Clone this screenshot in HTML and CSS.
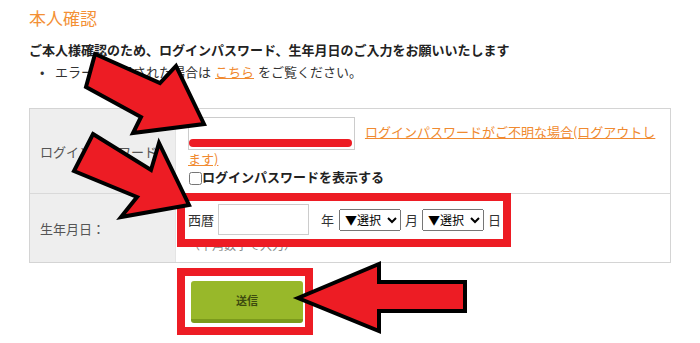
FILE: index.html
```html
<!DOCTYPE html>
<html lang="ja">
<head>
    <meta charset="UTF-8">
    <meta name="viewport" content="width=device-width, initial-scale=1.0">
    <title>本人確認</title>
    <link rel="stylesheet" href="styles.css">
</head>
<body>

    <div class="page">
        <h1 class="title">本人確認</h1>
        <p class="lead">ご本人様確認のため、ログインパスワード、生年月日のご入力をお願いいたします</p>
        <ul class="notes">
            <li>エラーが表示された場合は <a href="#">こちら</a> をご覧ください。</li>
        </ul>

        <!-- Verification form -->
        <div class="form-table">
            <div class="label-cell">ログインパスワード</div>
            <div class="field-cell pw-cell">
                <input type="password" class="pw-input" value="">
                <a href="#" class="forgot-link">ログインパスワードがご不明な場合(ログアウトします)</a>
                <label class="show-pw"><input type="checkbox" class="show-check">ログインパスワードを表示する</label>
            </div>

            <div class="label-cell row-2">生年月日：</div>
            <div class="field-cell birth-cell row-2">
                <div class="birth-row">
                    <span>西暦</span>
                    <input type="text" class="year-input">
                    <span class="unit unit-year">年</span>
                    <select class="pick"><option>▼選択</option></select>
                    <span class="unit">月</span>
                    <select class="pick"><option>▼選択</option></select>
                    <span class="unit">日</span>
                </div>
                <p class="hint">（半角数字で入力）</p>
            </div>
        </div>

        <div class="actions">
            <button class="send-btn">送信</button>
        </div>
    </div>

    <!-- Annotation overlay -->
    <svg class="marks" width="700" height="343" viewBox="0 0 700 343">
        <line x1="193" y1="143" x2="348" y2="143" class="redact" />
        <rect x="181" y="197" width="326" height="46" class="frame" />
        <rect x="181" y="272" width="128" height="59" class="frame" />
        <polygon class="arrow" points="95,54 160,83 176,66 204,124 133,133 141,117 86,87" />
        <polygon class="arrow" points="93,134 151,170 159,143 189,205 121,217 137,197 74,171" />
        <polygon class="arrow" points="298,298 379,264 379,282 465,282 465,311 379,311 379,331" />
    </svg>

</body>
</html>
```

FILE: styles.css
```css
body {
    margin: 0;
    font-family: "Noto Sans CJK JP", "Noto Sans", sans-serif;
    color: #222;
    background: #fff;
    position: relative;
    width: 700px;
    height: 343px;
    overflow: hidden;
}

.page {
    padding: 6px 29px 0;
}

.title {
    font-size: 17px;
    line-height: 24px;
    font-weight: normal;
    color: #f39035;
    margin: 0;
}

.lead {
    font-size: 13px;
    line-height: 18px;
    font-weight: bold;
    margin: 11px 0 0;
}

.notes {
    list-style: none;
    margin: 4px 0 0;
    padding: 0;
    font-size: 13px;
    line-height: 18px;
    color: #333;
}

.notes li {
    display: flex;
}

.notes li::before {
    content: "•";
    width: 15px;
    margin-left: 11px;
}

.notes a {
    color: #f08a30;
    margin: 0 4px;
}

/* Form table */
.form-table {
    display: grid;
    grid-template-columns: 146px 1fr;
    margin-top: 27px;
    border: 1px solid #d4d4d4;
    font-size: 13px;
}

.label-cell {
    background: #eeeeee;
    color: #555;
    display: flex;
    align-items: center;
    padding-left: 10px;
    border-right: 1px solid #e4e4e4;
}

.row-2 {
    border-top: 1px solid #d9d9d9;
}

.field-cell {
    padding: 8px 12px 7px 12px;
    line-height: 18px;
    color: #333;
}

.pw-input {
    width: 167px;
    height: 33px;
    box-sizing: border-box;
    border: 1px solid #ccc;
    vertical-align: middle;
    margin: 0 7px 0 0;
}

.forgot-link {
    color: #f08a30;
}

.show-pw {
    display: flex;
    align-items: center;
    font-weight: bold;
    color: #222;
}

.show-check {
    width: 13px;
    height: 13px;
    margin: 2px 0 0 1px;
}

.birth-cell {
    padding: 10px 12px 9px;
}

.birth-row {
    display: flex;
    align-items: center;
}

.year-input {
    width: 91px;
    height: 31px;
    box-sizing: border-box;
    border: 1px solid #ccc;
    margin: 0 12px 0 4px;
}

.unit-year {
    margin-right: 1px;
}

.pick {
    width: 62px;
    height: 22px;
    font-size: 12px;
    font-family: inherit;
    margin: 0 4px;
    padding: 0 0 0 1px;
}

.hint {
    margin: 2px 0 0;
    font-size: 12px;
    line-height: 16px;
    color: #888;
}

/* Submit */
.actions {
    padding-left: 162px;
    margin-top: 18px;
}

.send-btn {
    width: 112px;
    height: 42px;
    background: #98b82a;
    border: none;
    border-bottom: 4px solid #7b9a1c;
    border-radius: 3px;
    color: #3d4b0f;
    font-family: inherit;
    font-size: 11px;
    font-weight: bold;
}

/* Annotation overlay */
.marks {
    position: absolute;
    top: 0;
    left: 0;
    pointer-events: none;
}

.frame {
    fill: none;
    stroke: #ed1c24;
    stroke-width: 8;
}

.redact {
    stroke: #ed1c24;
    stroke-width: 8;
    stroke-linecap: round;
}

.arrow {
    fill: #ed1c24;
    stroke: #000;
    stroke-width: 4;
    stroke-linejoin: miter;
}
```
